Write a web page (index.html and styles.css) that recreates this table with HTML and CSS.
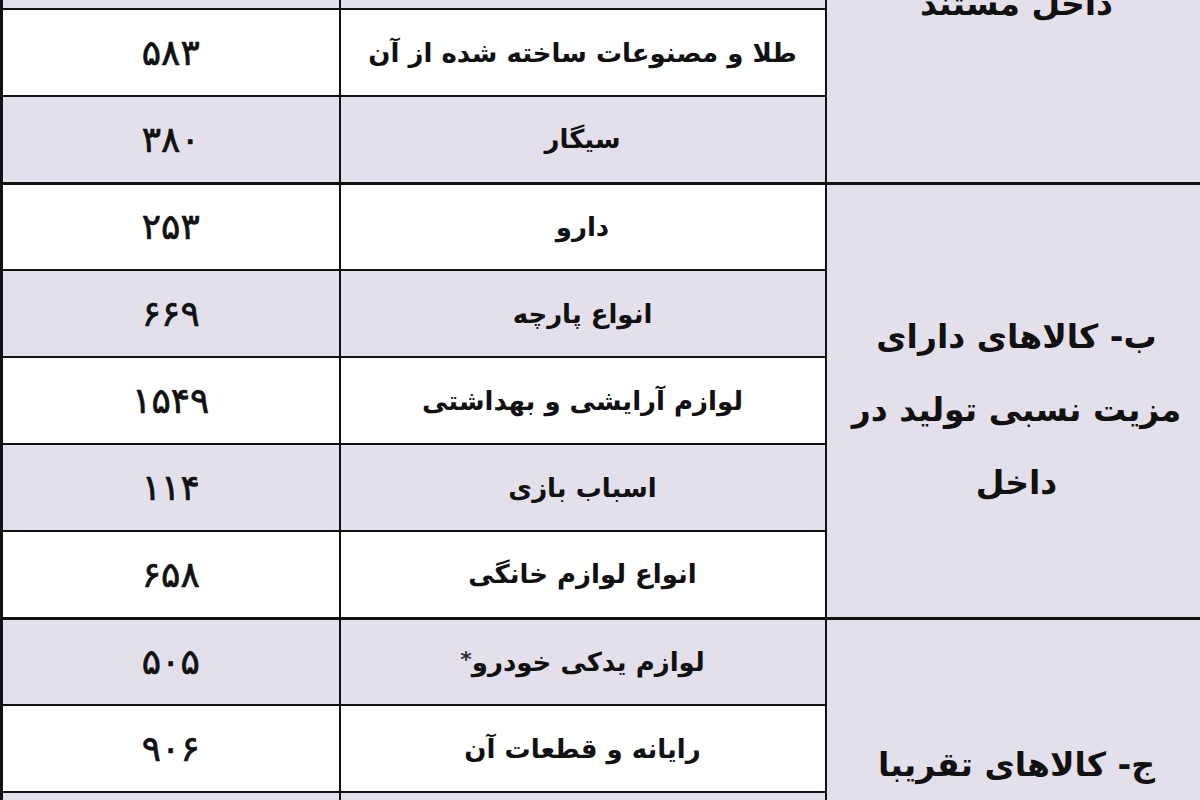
FILE: index.html
```html
<!DOCTYPE html>
<html lang="fa" dir="rtl">
<head>
<meta charset="utf-8">
<title>جدول کالاها</title>
<link rel="stylesheet" href="styles.css">
</head>
<body>
<div class="frame">
  <table class="goods">
    <colgroup>
      <col class="c-cat">
      <col class="c-item">
      <col class="c-num">
    </colgroup>
    <tbody>
      <tr class="row">
        <td class="cat cat-a" rowspan="6"><div class="cat-text">الف- کالاهای دارای<br>تولید مشابه در<br>داخل مستند</div></td>
        <td class="item"></td>
        <td class="num"></td>
      </tr>
      <tr class="row alt">
        <td class="item"></td>
        <td class="num"></td>
      </tr>
      <tr class="row">
        <td class="item"></td>
        <td class="num"></td>
      </tr>
      <tr class="row alt">
        <td class="item"></td>
        <td class="num"></td>
      </tr>
      <tr class="row">
        <td class="item">طلا و مصنوعات ساخته شده از آن</td>
        <td class="num">۵۸۳</td>
      </tr>
      <tr class="row alt">
        <td class="item">سیگار</td>
        <td class="num">۳۸۰</td>
      </tr>

      <tr class="row section">
        <td class="cat" rowspan="5"><div class="cat-text">ب- کالاهای دارای<br>مزیت نسبی تولید در<br>داخل</div></td>
        <td class="item">دارو</td>
        <td class="num">۲۵۳</td>
      </tr>
      <tr class="row alt">
        <td class="item">انواع پارچه</td>
        <td class="num">۶۶۹</td>
      </tr>
      <tr class="row">
        <td class="item">لوازم آرایشی و بهداشتی</td>
        <td class="num">۱۵۴۹</td>
      </tr>
      <tr class="row alt">
        <td class="item">اسباب بازی</td>
        <td class="num">۱۱۴</td>
      </tr>
      <tr class="row">
        <td class="item">انواع لوازم خانگی</td>
        <td class="num">۶۵۸</td>
      </tr>

      <tr class="row section alt">
        <td class="cat" rowspan="4"><div class="cat-text">ج- کالاهای تقریبا<br>فاقد تولید داخل</div></td>
        <td class="item">لوازم یدکی خودرو<span class="star">*</span></td>
        <td class="num">۵۰۵</td>
      </tr>
      <tr class="row">
        <td class="item">رایانه و قطعات آن</td>
        <td class="num">۹۰۶</td>
      </tr>
      <tr class="row alt">
        <td class="item"></td>
        <td class="num"></td>
      </tr>
      <tr class="row">
        <td class="item"></td>
        <td class="num"></td>
      </tr>
    </tbody>
  </table>
</div>
</body>
</html>
```

FILE: styles.css
```css
html, body {
  margin: 0;
  padding: 0;
  background: #ffffff;
}

.frame {
  width: 1200px;
  height: 800px;
  overflow: hidden;
  direction: ltr;
}

.goods {
  direction: rtl;
  border-collapse: collapse;
  table-layout: fixed;
  width: 1206px;
  margin-top: -340px;
  margin-left: 0;
  font-family: "DejaVu Sans", sans-serif;
  color: #111111;
  border-left: 3px solid #111111;
}

.c-cat { width: 382px; }
.c-item { width: 486px; }
.c-num { width: 338px; }

.goods td {
  border: 2px solid #111111;
  text-align: center;
  vertical-align: middle;
  padding: 0;
}

.goods td.num {
  border-left: 3px solid #111111;
}

.row { height: 87px; }

.row td.item,
.row td.num { background: #ffffff; }

.row.alt td.item,
.row.alt td.num { background: #e4e0eb; }

.row.section td { border-top-width: 3px; }

.item {
  font-size: 26px;
  font-weight: bold;
}

.star {
  font-size: 22px;
  vertical-align: 4px;
  color: #333333;
}

.num {
  font-size: 36px;
  font-weight: normal;
  -webkit-text-stroke: 0.7px #111111;
}

.cat {
  background: #e4e0eb;
  font-size: 33px;
  font-weight: bold;
}

.cat-text {
  line-height: 73px;
  padding-top: 18px;
}
```
